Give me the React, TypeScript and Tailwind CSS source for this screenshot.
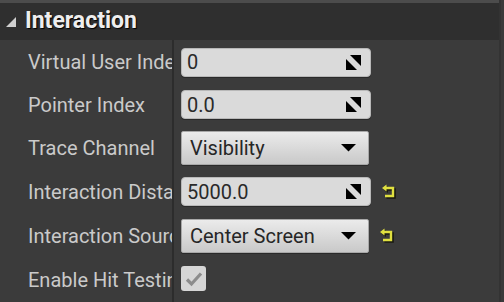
import React from "react";

const font = { fontFamily: "Roboto, 'Noto Sans', sans-serif" };

function ResizeIcon() {
  return (
    <svg width="15" height="15" viewBox="0 0 15 15" className="shrink-0">
      <polygon points="4,0 15,0 15,11" fill="#000" />
      <polygon points="0,4 0,15 11,15" fill="#000" />
    </svg>
  );
}

function DropArrow() {
  return (
    <svg width="15" height="8" viewBox="0 0 15 8" className="shrink-0">
      <polygon points="0,0 15,0 7.5,7.5" fill="#000" />
    </svg>
  );
}

function ResetIcon() {
  return (
    <svg width="15" height="16" viewBox="0 0 15 16" className="shrink-0">
      <g transform="translate(1.5,1.5)">
        <path d="M4 4 H11 V12 H3" stroke="#1a1a10" strokeWidth="2.6" fill="none" />
        <polygon points="0,4 4.5,0.5 4.5,7.5" fill="#1a1a10" />
      </g>
      <path d="M4 4 H11 V12 H3" stroke="#e0e040" strokeWidth="2.4" fill="none" />
      <polygon points="0,4 4.5,0.5 4.5,7.5" fill="#e0e040" />
    </svg>
  );
}

function NumInput({ value }: { value: string }) {
  return (
    <div className="flex items-center justify-between w-[190px] h-[29px] rounded-[4px] bg-[#dadada] border border-[#b8b8b8] pl-[5px] pr-[9px] text-[20px] text-[#2a2a2a] shadow-[0_1px_0_#2a2a2a]">
      <span>{value}</span>
      <ResizeIcon />
    </div>
  );
}

function Dropdown({ value }: { value: string }) {
  return (
    <div className="flex items-center justify-between w-[188px] h-[34px] rounded-[2px] bg-gradient-to-b from-[#ebebeb] to-[#c9c9c9] border border-[#a8a8a8] pl-[8px] pr-[12px] text-[20px] text-[#262626] shadow-[0_1px_0_#2a2a2a]">
      <span>{value}</span>
      <DropArrow />
    </div>
  );
}

function Row({
  label,
  h,
  children,
  reset,
}: {
  label: string;
  h: string;
  children: React.ReactNode;
  reset?: boolean;
}) {
  return (
    <div className={`flex ${h}`}>
      <div className="w-[172px] shrink-0 flex items-center pl-[28px] overflow-hidden whitespace-nowrap text-[20px] text-[#cacaca]">
        {label}
      </div>
      <div className="w-[2px] shrink-0 bg-[#2c2c2c]" />
      <div className="flex items-center pl-[7px] gap-[11px]">
        {children}
        {reset && <ResetIcon />}
      </div>
    </div>
  );
}

export default function App() {
  return (
    <div className="w-[504px] h-[302px] overflow-hidden bg-[#3b3b3b] flex" style={font}>
      <div className="w-[499px] flex flex-col">
        <div className="h-[3px] bg-[#4c4c4c]" />
        <div className="h-[37px] bg-[#2f2f2f] flex items-center pl-[6px]">
          <svg width="10" height="10" viewBox="0 0 10 10" className="mr-[9px]">
            <polygon points="10,0 10,10 0,10" fill="#d0d0d0" />
          </svg>
          <span className="text-[23px] font-bold text-[#eeeeee] [text-shadow:1px_1px_1px_#000]">
            Interaction
          </span>
        </div>
        <Row label="Virtual User Index" h="h-[44px]">
          <NumInput value="0" />
        </Row>
        <Row label="Pointer Index" h="h-[41px]">
          <NumInput value="0.0" />
        </Row>
        <Row label="Trace Channel" h="h-[45px]">
          <Dropdown value="Visibility" />
        </Row>
        <Row label="Interaction Distance" h="h-[43px]" reset>
          <NumInput value="5000.0" />
        </Row>
        <Row label="Interaction Source" h="h-[45px]" reset>
          <Dropdown value="Center Screen" />
        </Row>
        <Row label="Enable Hit Testing" h="h-[44px]">
          <div className="w-[25px] h-[25px] rounded-[3px] bg-[#d6d6d6] flex items-center justify-center mb-[3px]">
            <svg width="18" height="16" viewBox="0 0 18 16">
              <path d="M2 8.5 L6.5 13 L16 2.5" stroke="#8c8c8c" strokeWidth="3.2" fill="none" />
            </svg>
          </div>
        </Row>
      </div>
      <div className="w-[2px] bg-[#333333]" />
      <div className="flex-1 bg-[#3a3a3a]" />
    </div>
  );
}
